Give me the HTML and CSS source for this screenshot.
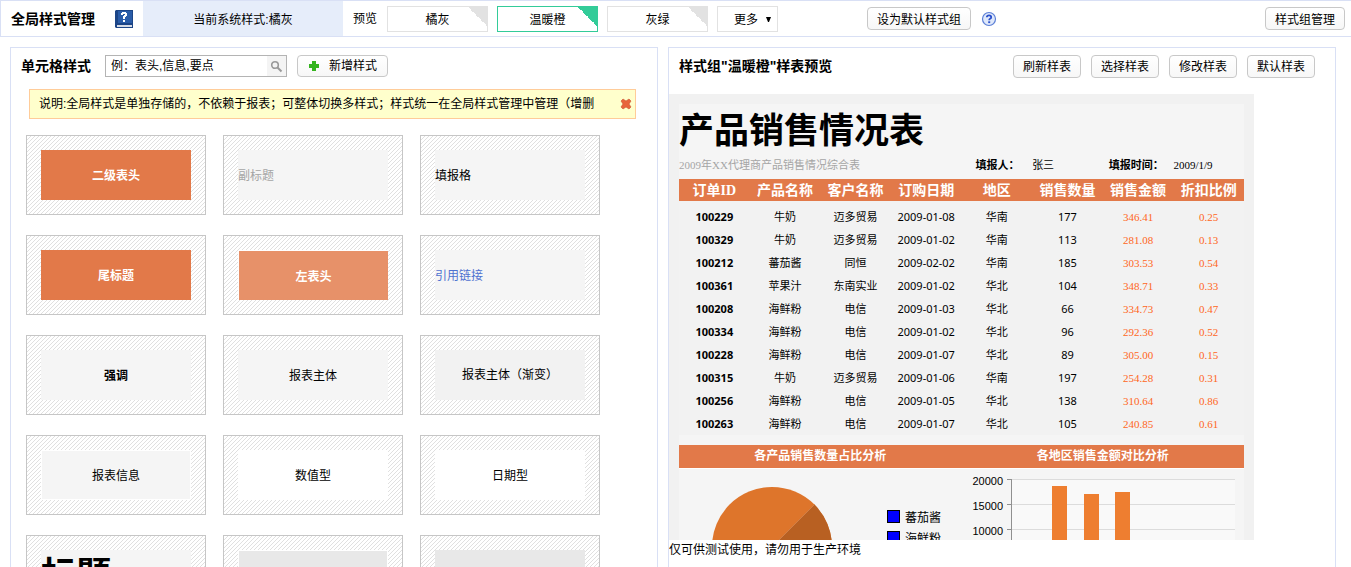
FILE: index.html
```html
<!DOCTYPE html>
<html lang="zh-CN">
<head>
<meta charset="utf-8">
<title>全局样式管理</title>
<link rel="stylesheet" href="styles.css">
</head>
<body>
<header class="topbar">
  <h1 class="topbar-title">全局样式管理</h1>
  <svg class="book" width="18" height="18" viewBox="0 0 18 18" role="img" aria-label="帮助手册">
    <path d="M1 0H18V18H1L0 17V1Z" fill="#1c4587"/>
    <path d="M3 1H17V13H3Z" fill="#2a5ca8"/>
    <path d="M2 15H17V17H2Z" fill="#d5dbe6"/>
    <path d="M6 5V3H7V2H11V3H12V6H11V7H10V9H8V6H9V5H10V4H8V5Z M8 10H10V12H8Z" fill="#fff"/>
  </svg>
  <div class="current">当前系统样式:橘灰</div>
  <span class="preview-label">预览</span>
  <nav class="tabs">
    <button class="tab">橘灰</button>
    <button class="tab tab-active">温暖橙</button>
    <button class="tab">灰绿</button>
    <button class="more">更多<svg width="5" height="5" viewBox="0 0 5 5"><path d="M0 0H5L3 5H2Z" fill="#000"/></svg></button>
  </nav>
  <button class="btn set-default">设为默认样式组</button>
  <svg class="help" width="16" height="16" viewBox="0 0 16 16" role="img" aria-label="帮助">
    <circle cx="8" cy="8" r="6.500" fill="#dfe8fa" stroke="#5b7fd6" stroke-width="1.200"/>
    <path d="M5.800 6.300Q5.800 4.300 8 4.300T10.200 6.200Q10.200 7.200 9 7.800Q8.200 8.200 8.200 9.300" fill="none" stroke="#2b50cc" stroke-width="1.800"/>
    <path d="M7.200 10.300H9.200V12.100H7.200Z" fill="#2b50cc"/>
  </svg>
  <button class="btn manage">样式组管理</button>
</header>

<main class="panels">
  <section class="panel">
    <div class="panel-head">
      <h2 class="panel-title">单元格样式</h2>
      <form class="search">
        <input class="search-input" type="text" value="例：表头,信息,要点" aria-label="搜索样式">
        <button class="search-btn" type="button" aria-label="搜索">
          <svg width="13" height="13" viewBox="0 0 13 13"><circle cx="5" cy="5" r="3.300" fill="none" stroke="#999" stroke-width="1.600"/><path d="M7.500 7.500L11.500 11.500" stroke="#999" stroke-width="2"/></svg>
        </button>
      </form>
      <button class="btn add"><svg width="12" height="12" viewBox="0 0 12 12"><path d="M4 1H8V4H11V8H8V11H4V8H1V4H4Z" fill="#35b51f"/></svg>新增样式</button>
    </div>
    <div class="notice">
      <span class="notice-text">说明:全局样式是单独存储的，不依赖于报表；可整体切换多样式；样式统一在全局样式管理中管理（增删</span>
      <button class="notice-close" aria-label="关闭"><svg width="12" height="12" viewBox="0 0 12 12"><path d="M1 3L3 1L6 3L9 1L11 3L9 6L11 9L9 11L6 9L3 11L1 9L3 6Z" fill="#e8643c" stroke="#c9542f" stroke-width="0.600"/></svg></button>
    </div>
    <div class="cards">
      <div class="card"><div class="sample orange">二级表头</div></div>
      <div class="card"><div class="sample left muted">副标题</div></div>
      <div class="card"><div class="sample left">填报格</div></div>
      <div class="card"><div class="sample orange">尾标题</div></div>
      <div class="card"><div class="sample light-orange">左表头</div></div>
      <div class="card"><div class="sample left"><a class="sample-link" href="#">引用链接</a></div></div>
      <div class="card"><div class="sample strong">强调</div></div>
      <div class="card"><div class="sample">报表主体</div></div>
      <div class="card"><div class="sample gradient">报表主体（渐变）</div></div>
      <div class="card"><div class="sample outlined">报表信息</div></div>
      <div class="card"><div class="sample white">数值型</div></div>
      <div class="card"><div class="sample white">日期型</div></div>
      <div class="card"><div class="sample left heading">标题</div></div>
      <div class="card"><div class="sample gray outlined"></div></div>
      <div class="card"><div class="sample gray"></div></div>
    </div>
  </section>

  <section class="panel">
    <div class="panel-head preview-head">
      <h2 class="panel-title">样式组"温暖橙"样表预览</h2>
      <div class="actions">
        <button class="btn">刷新样表</button>
        <button class="btn">选择样表</button>
        <button class="btn">修改样表</button>
        <button class="btn">默认样表</button>
      </div>
    </div>
    <div class="frame">
      <div class="report">
        <h3 class="report-title">产品销售情况表</h3>
        <div class="info">
          <span class="info-sub">2009年XX代理商产品销售情况综合表</span>
          <b class="info-label">填报人：</b><span>张三</span>
          <b class="info-label">填报时间：</b><span class="info-date">2009/1/9</span>
        </div>
        <table class="data">
          <thead><tr><th>订单<span class="serif">ID</span></th><th>产品名称</th><th>客户名称</th><th>订购日期</th><th>地区</th><th>销售数量</th><th>销售金额</th><th>折扣比例</th></tr></thead>
          <tbody>
            <tr><td>100229</td><td>牛奶</td><td>迈多贸易</td><td>2009-01-08</td><td>华南</td><td>177</td><td>346.41</td><td>0.25</td></tr>
            <tr><td>100329</td><td>牛奶</td><td>迈多贸易</td><td>2009-01-02</td><td>华南</td><td>113</td><td>281.08</td><td>0.13</td></tr>
            <tr><td>100212</td><td>蕃茄酱</td><td>同恒</td><td>2009-02-02</td><td>华南</td><td>185</td><td>303.53</td><td>0.54</td></tr>
            <tr><td>100361</td><td>苹果汁</td><td>东南实业</td><td>2009-01-02</td><td>华北</td><td>104</td><td>348.71</td><td>0.33</td></tr>
            <tr><td>100208</td><td>海鲜粉</td><td>电信</td><td>2009-01-03</td><td>华北</td><td>66</td><td>334.73</td><td>0.47</td></tr>
            <tr><td>100334</td><td>海鲜粉</td><td>电信</td><td>2009-01-02</td><td>华北</td><td>96</td><td>292.36</td><td>0.52</td></tr>
            <tr><td>100228</td><td>海鲜粉</td><td>电信</td><td>2009-01-07</td><td>华北</td><td>89</td><td>305.00</td><td>0.15</td></tr>
            <tr><td>100315</td><td>牛奶</td><td>迈多贸易</td><td>2009-01-06</td><td>华南</td><td>197</td><td>254.28</td><td>0.31</td></tr>
            <tr><td>100256</td><td>海鲜粉</td><td>电信</td><td>2009-01-05</td><td>华北</td><td>138</td><td>310.64</td><td>0.86</td></tr>
            <tr><td>100263</td><td>海鲜粉</td><td>电信</td><td>2009-01-07</td><td>华北</td><td>105</td><td>240.85</td><td>0.61</td></tr>
          </tbody>
        </table>
        <div class="chart-heads"><span>各产品销售数量占比分析</span><span>各地区销售金额对比分析</span></div>
        <div class="charts">
          <svg class="chart" width="282" height="150" viewBox="0 0 282 150">
            <circle cx="93" cy="78" r="60" fill="#de752b"/>
            <path d="M93 78L135.400 35.600A60 60 0 0 1 135.400 120.400Z" fill="#b86022"/>
            <path d="M93 78L135.400 35.600" stroke="#d28048" stroke-width="1"/>
            <g fill="#0000ff" stroke="#000"><rect x="208.500" y="41.500" width="12" height="12"/><rect x="208.500" y="62.500" width="12" height="12"/></g>
            <text class="chart-text" x="226" y="53">蕃茄酱</text>
            <text class="chart-text" x="226" y="74">海鲜粉</text>
          </svg>
          <svg class="chart" width="282" height="150" viewBox="0 0 282 150">
            <rect x="50" y="10" width="223" height="130" fill="#f9f9f9"/>
            <path d="M50 10.500H273M50 35.500H273M50 60.500H273M50 85.500H273" stroke="#dcdcdc"/>
            <path d="M49.500 10V140M45 10.500H50M45 35.500H50M45 60.500H50M45 85.500H50" stroke="#909090"/>
            <g fill="#ee7e30"><rect x="90" y="17" width="15" height="120"/><rect x="122" y="25" width="15" height="112"/><rect x="153" y="23" width="15" height="114"/></g>
            <g class="chart-axis" text-anchor="end"><text x="41" y="16">20000</text><text x="41" y="41">15000</text><text x="41" y="66">10000</text></g>
          </svg>
        </div>
      </div>
    </div>
    <p class="trial">仅可供测试使用，请勿用于生产环境</p>
  </section>
</main>
</body>
</html>
```
FILE: styles.css
```css
* { box-sizing: border-box; }
body {
  margin: 0;
  height: 100vh;
  overflow: hidden;
  display: flex;
  flex-direction: column;
  background: #fff;
  color: #000;
  font: 12px/18px "Liberation Sans", "Noto Sans CJK SC", sans-serif;
}
h1, h2, h3, p { margin: 0; }
button { font: inherit; color: inherit; padding: 0; cursor: pointer; white-space: nowrap; }
svg { display: block; flex: none; }

.topbar {
  flex: none;
  height: 37px;
  display: flex;
  align-items: center;
  padding: 0 6px 0 10px;
  border: 1px solid #d9e0f5;
  border-right: 0;
  white-space: nowrap;
}
.topbar-title { font-size: 14px; font-weight: bold; }
.book { margin: 0 10px 0 20px; }
.current {
  width: 200px;
  align-self: stretch;
  display: flex;
  align-items: center;
  justify-content: center;
  padding-top: 2px;
  background: #e6edfa;
}
.preview-label { margin: 0 10px; }
.tabs { display: flex; gap: 9px; }
.tab, .more {
  height: 26px;
  padding-top: 2px;
  border: 1px solid #e2e2e2;
  background: #fff;
}
.tab {
  width: 101px;
  background: linear-gradient(45deg, transparent 50%, #e2e2e2 50%) right top / 19px 19px no-repeat #fff;
}
.tab-active {
  border-color: #33cc99;
  background-image: linear-gradient(45deg, transparent 50%, #33cc99 50%);
}
.more {
  width: 61px;
  display: flex;
  align-items: center;
  justify-content: center;
  gap: 8px;
  padding-left: 10px;
}
.btn {
  height: 23px;
  padding: 2px 9px 0;
  border: 1px solid #c8c8c8;
  border-radius: 4px;
  background: linear-gradient(#fff, #f7f7f7);
}
.set-default { margin-left: 89px; }
.help { margin-left: 10px; }
.manage { margin-left: auto; }

.panels {
  flex: 1;
  min-height: 0;
  display: grid;
  grid-template-columns: 648fr 668fr;
  gap: 10px;
  padding: 10px 15px 0 10px;
}
.panel {
  min-width: 0;
  overflow: hidden;
  border: 1px solid #d9e0f5;
  border-bottom: 0;
}
.panel-head { display: flex; align-items: center; height: 36px; padding: 0 20px 0 10px; }
.panel-title { font-size: 14px; font-weight: bold; white-space: nowrap; }
.search {
  display: flex;
  width: 182px;
  height: 22px;
  margin: 0 10px 0 14px;
  border: 1px solid #b4b4b4;
}
.search-input {
  flex: 1;
  min-width: 0;
  padding: 0 5px;
  border: 0;
  font: inherit;
  color: inherit;
  background: #fff;
}
.search-btn {
  width: 19px;
  display: flex;
  align-items: center;
  justify-content: center;
  border: 0;
  background: #f4f4f4;
}
.add { display: flex; align-items: center; gap: 9px; height: 22px; padding: 0 10px; }

.notice {
  display: flex;
  align-items: center;
  justify-content: space-between;
  height: 30px;
  margin: 5px 21px 16px 18px;
  padding: 0 3px 0 9px;
  border: 1px solid #ffcc99;
  background: #ffffcc;
}
.notice-text { overflow: hidden; white-space: nowrap; }
.notice-close { border: 0; background: none; }

.cards {
  display: grid;
  grid-template-columns: repeat(auto-fill, 180px);
  gap: 20px 17px;
  padding: 0 15px;
}
.card {
  height: 80px;
  padding: 14px;
  border: 1px solid #c6c6c6;
  background: url("data:image/svg+xml,%3Csvg xmlns='http://www.w3.org/2000/svg' width='4' height='4' shape-rendering='crispEdges'%3E%3Cpath d='M3 0h1v1h-1zM2 1h1v1h-1zM1 2h1v1h-1zM0 3h1v1h-1z' fill='%23e0e0e0'/%3E%3C/svg%3E") #fff;
}
.sample {
  height: 50px;
  display: flex;
  align-items: center;
  justify-content: center;
  padding-top: 2px;
  background: #f5f5f5;
  white-space: nowrap;
}
.left { justify-content: flex-start; }
.orange, .light-orange { background: #e27949; color: #fff; font-weight: bold; }
.light-orange { background: #e79169; border: 1px solid #fff; border-width: 1px 0 0 1px; }
.muted { color: #a5a5a5; }
.sample-link { color: #4f71d0; text-decoration: none; }
.strong { font-weight: bold; }
.gradient { padding-top: 0; background: #f2f2f2; }
.outlined { border: 1px solid #fff; }
.white { background: #fff; }
.gray { background: #e8e8e8; }
.heading { padding-top: 0; font-size: 35px; font-weight: bold; }

.preview-head { justify-content: space-between; }
.actions { display: flex; gap: 10px; }
.frame {
  width: 585px;
  height: 446px;
  margin-top: 10px;
  padding: 10px;
  overflow: hidden;
  background: #f1f1f1;
}
.report { background: #f5f5f5; }
.report-title { font-size: 35px; line-height: 54px; }
.info {
  display: grid;
  grid-template-columns: repeat(8, 1fr);
  height: 21px;
  align-items: center;
  padding-bottom: 6px;
  font-size: 11px;
  line-height: 15px;
  white-space: nowrap;
}
.info-sub {
  grid-column: span 4;
  color: #a5a5a5;
  font-family: "Liberation Serif", "Noto Sans CJK SC", serif;
}
.info-label { padding-left: 14px; }
.info-label:nth-of-type(2) { padding-left: 6px; }
.info-date { font-family: "Liberation Serif", "Noto Sans CJK SC", serif; }
.data {
  width: 100%;
  table-layout: fixed;
  border-collapse: collapse;
  text-align: center;
  background: #f2f2f2;
  font: 11px/22px "Noto Sans", "Noto Sans CJK SC", sans-serif;
}
.data th, .data td { padding: 0; white-space: nowrap; }
.data th {
  height: 22px;
  background: #e27949;
  color: #fff;
  font-size: 14px;
  font-weight: bold;
  line-height: 18px;
}
.data tbody::before { content: ""; display: block; height: 4px; }
.data td { height: 23px; }
.data td:first-child { font-weight: bold; }
.data td:nth-child(n+7) { color: #ff6622; font-family: "Liberation Serif", serif; }
.serif { font-family: "Liberation Serif", serif; }
.chart-heads {
  display: grid;
  grid-template-columns: 1fr 1fr;
  margin-top: 10px;
  border-bottom: 1px solid #fff;
  background: #e27949;
  color: #fff;
  font-weight: bold;
  line-height: 23px;
  text-align: center;
}
.charts { display: grid; grid-template-columns: 1fr 1fr; }
.chart-text { font: 12px "Liberation Sans", "Noto Sans CJK SC", sans-serif; }
.chart-axis { font: 11px "Liberation Sans", sans-serif; }
.trial { line-height: 20px; }
```
